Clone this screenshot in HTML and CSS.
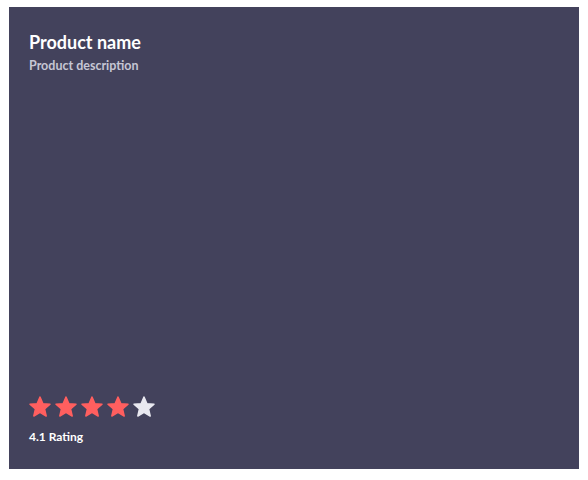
FILE: index.html
```html
<!DOCTYPE html>
<html>
<head>
<meta charset="utf-8">
<link rel="stylesheet" href="styles.css">
</head>
<body>
<div class="card">
  <div class="head">
    <div class="title">Product name</div>
    <div class="desc">Product description</div>
  </div>
  <div class="foot">
    <div class="stars">
      <svg class="star on" viewBox="0 0 24 24"><path d="M12 17.27L18.18 21l-1.64-7.03L22 9.24l-7.19-.61L12 2 9.19 8.63 2 9.24l5.46 4.73L5.82 21z" stroke-linejoin="round" stroke-width="1.5"/></svg>
      <svg class="star on" viewBox="0 0 24 24"><path d="M12 17.27L18.18 21l-1.64-7.03L22 9.24l-7.19-.61L12 2 9.19 8.63 2 9.24l5.46 4.73L5.82 21z" stroke-linejoin="round" stroke-width="1.5"/></svg>
      <svg class="star on" viewBox="0 0 24 24"><path d="M12 17.27L18.18 21l-1.64-7.03L22 9.24l-7.19-.61L12 2 9.19 8.63 2 9.24l5.46 4.73L5.82 21z" stroke-linejoin="round" stroke-width="1.5"/></svg>
      <svg class="star on" viewBox="0 0 24 24"><path d="M12 17.27L18.18 21l-1.64-7.03L22 9.24l-7.19-.61L12 2 9.19 8.63 2 9.24l5.46 4.73L5.82 21z" stroke-linejoin="round" stroke-width="1.5"/></svg>
      <svg class="star off" viewBox="0 0 24 24"><path d="M12 17.27L18.18 21l-1.64-7.03L22 9.24l-7.19-.61L12 2 9.19 8.63 2 9.24l5.46 4.73L5.82 21z" stroke-linejoin="round" stroke-width="1.5"/></svg>
    </div>
    <div class="rating">4.1 Rating</div>
  </div>
</div>
</body>
</html>
```
FILE: styles.css
```css
html, body {
  margin: 0;
  padding: 0;
  background: #ffffff;
}
body {
  padding: 7px 9px;
  font-family: Lato, "Open Sans", sans-serif;
}
.card {
  box-sizing: border-box;
  width: 570px;
  height: 462px;
  background: #43425c;
  padding: 24px 20px 24px 20px;
  display: flex;
  flex-direction: column;
  justify-content: space-between;
}
.title {
  color: #ffffff;
  font-weight: 700;
  font-size: 18px;
  line-height: 22px;
}
.desc {
  color: #c6c6d4;
  font-weight: 700;
  font-size: 12.5px;
  line-height: 18px;
  margin-top: 4px;
}
.stars {
  display: flex;
  gap: 2px;
  margin-left: -1px;
}
.star {
  width: 24px;
  height: 24px;
}
.star.on {
  fill: #ff5f5f;
  stroke: #ff5f5f;
}
.star.off {
  fill: #e9e9f0;
  stroke: #e9e9f0;
}
.rating {
  color: #ffffff;
  font-weight: 700;
  font-size: 12px;
  line-height: 16px;
  margin-top: 10px;
}
```
